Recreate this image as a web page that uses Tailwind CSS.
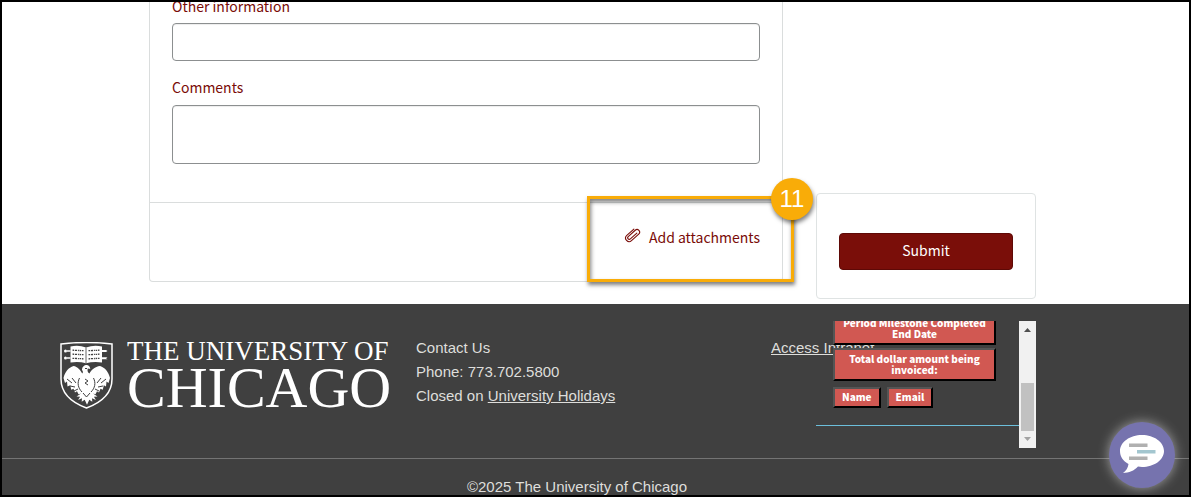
<!DOCTYPE html>
<html lang="en">
<head>
<meta charset="utf-8">
<meta name="viewport" content="width=device-width, initial-scale=1">
<title>Invoice request</title>
<script src="https://cdn.jsdelivr.net/npm/@tailwindcss/browser@4"></script>
</head>
<body class="bg-white">
<div class="relative flex min-h-screen flex-col overflow-hidden border-2 border-black font-['Noto_Sans_CJK_JP',sans-serif] text-sm text-[#7a0c08]">
  <main class="mx-auto flex w-full max-w-[893px] items-end gap-[33px] pr-[6px]">
    <form id="request" class="relative mb-[22px] flex-1 rounded-b border border-t-0 border-[#dadddd]">
      <div class="flex flex-col px-[22px] pb-[38px]">
        <label for="other" class="-mt-[6px] mb-[7px] leading-5">Other information</label>
        <input id="other" type="text" class="h-[38px] rounded border border-[#8c8f90] px-3 shadow-[inset_0_1px_1px_#00000013]">
        <label for="comments" class="mt-4 mb-2 leading-5">Comments</label>
        <textarea id="comments" class="block h-[59px] resize-none rounded border border-[#8c8f90] px-3 shadow-[inset_0_1px_1px_#00000013]"></textarea>
      </div>
      <div class="flex h-[79px] justify-end border-t border-[#dadddd] px-[22px] pt-[22px]">
        <button type="button" class="flex h-6 items-center gap-2">
          <svg class="-mt-1 h-4 w-[17px]" viewBox="0 0 17 16" fill="none" stroke="currentColor" stroke-width="1.1" stroke-linecap="round"><path transform="translate(8.500 8) rotate(-42)" d="M5-3.500H-4.500a3.500 3.500 0 0 0 0 7H5.200a2.600 2.600 0 0 0 0-5.200H-4.200a1.600 1.600 0 0 0 0 3.200H4.500"/></svg>
          Add attachments
        </button>
      </div>
      <div class="pointer-events-none absolute -right-[12px] -bottom-px h-[86px] w-[207px] border-[3px] border-[#f9ac08] shadow-[1px_3px_4px_#00000080,inset_1px_3px_4px_#00000080]"></div>
      <div class="absolute -right-[31px] bottom-[61px] flex size-[42px] items-center justify-center rounded-full bg-[#f9ac08] font-['Liberation_Sans',sans-serif] text-2xl text-white shadow-[1px_3px_4px_#00000080]">11</div>
    </form>
    <aside class="mb-[5px] w-[220px] rounded border border-[#dfe3e3] px-[22px] pt-[39px] pb-[28px]">
      <button type="submit" form="request" class="h-[37px] w-full rounded border border-[#5e0906] bg-[#7a0e09] pb-[3px] text-white">Submit</button>
    </aside>
  </main>
  <footer class="relative flex-1 bg-[#404040] font-['Liberation_Sans',sans-serif] text-[15px] text-[#dededb]">
    <div class="flex h-[154px] items-start pr-8 pl-[58px]">
      <a href="#" aria-label="The University of Chicago" class="mt-[38px] flex w-[356px] items-start gap-[14px] text-white">
        <svg class="h-[67px] w-[53px]" viewBox="0 0 53 67">
          <path d="M1 2q25.500-3 51 0v35c0 15-12 24-25.500 29C13 61 1 52 1 37z" fill="none" stroke="#fff" stroke-width="1.500"/>
          <g fill="#fff">
            <path d="M10.500 4.500q8-2 15.500 1 8-3 16-1v16q-8-1.500-16 .8-7.500-2.300-15.500-.8z"/>
            <circle cx="5.500" cy="9" r="1.500"/><circle cx="5.500" cy="16" r="1.500"/>
            <path d="M7 8.300h3.500v1.500H7zM7 15.300h3.500v1.500H7zM42 8h5.500l-1.500 1 1.500 1H42zM42 15.300h5.500l-1.500 1 1.500 1H42z"/>
            <path d="M22 28c0-3 2-5 5-5 2 .2 3 2 3.300 4l-2.500-.6c-.8 2 0 4 1.700 5.200C31 28 35 24.500 40 24c5 1.500 8.500 6 10 12l-1.500 5-2-1.500-.5 5-2.200-1.200-1 4.500-2.300-1-1.500 3.800-2-1.300-1.500 3-2.500-.8 4.500 3-3.600.2 2 3.200-3.900-1.600.3 3.400-3-2-2.300 5-2.300-5-3 2 .3-3.400-3.900 1.600 2-3.200-3.600-.2 4.500-3-2.500.8-1.500-3-2 1.300-1.500-3.800-2.300 1-1-4.500L7.500 44.500l-.5-5-2 1.500L3.500 36c1.500-6 5-10.500 10-12 4 .5 7 4 8.700 7.500 1-1 1-2-.2-3.500z"/>
          </g>
          <g stroke="#404040" fill="none">
            <path d="M26 5.500v15.500" stroke-width=".8"/>
            <path stroke-width="1.300" stroke-dasharray="1.500 .8 2.200 .9 1 .7" d="M12.500 8.200l11 .5M12.500 12.200l11 .5M12.500 16.300l11 .5M28.500 8.700l11-.5M28.500 12.700l11-.5M28.500 16.800l11-.5"/>
            <path stroke-width="1" d="M7 37l5 4M10 44l5 1M14 49l4-2M12 36l4 5M46 37l-5 4M43 44l-5 1M39 49l-4-2M41 36l-4 5M19.500 36c-2.500 5-1.500 10 2.500 14M33.500 36c2.500 5 1.500 10-2.500 14M23 51l3.500 4 3.500-4M25 26.500h2M25 37l3 2-3 2 3 2"/>
          </g>
        </svg>
        <span class="flex flex-col font-['Liberation_Serif',serif]"><span class="text-[27px] leading-[18px] whitespace-nowrap">THE UNIVERSITY OF</span><span class="text-[58px] leading-[56px]">CHICAGO</span></span>
      </a>
      <address class="mt-8 w-[355px] leading-6 not-italic">Contact Us<br>Phone: 773.702.5800<br>Closed on <a href="#" class="underline">University Holidays</a></address>
      <a href="#" class="mt-8 leading-6 underline">Access Intranet</a>
    </div>
    <p class="border-t border-[#747474] pt-5 pr-[37px] text-center leading-4">©2025 The University of Chicago</p>

    <!-- Field tags in a scrolling panel over the footer -->
    <div class="pointer-events-none absolute inset-x-0 top-[17px] mx-auto flex max-w-[893px] justify-end pr-[6px]">
      <div class="pointer-events-auto flex h-[127px] w-[220px] font-['Noto_Sans_CJK_JP',sans-serif] text-[10px] leading-[11px] font-black text-white">
        <div class="flex flex-1 flex-col justify-end overflow-hidden pb-[22px]">
          <div class="flex flex-col gap-[3px] pr-[23px] pl-[17px]">
            <button type="button" class="border-2 border-t-[#555] border-r-black border-b-black border-l-[#555] bg-[#d15852] pt-[3px] pb-1 whitespace-nowrap">Period Milestone Completed<br>End Date</button>
            <button type="button" class="border-2 border-t-[#555] border-r-black border-b-black border-l-[#555] bg-[#d15852] pt-[3px] pb-1 whitespace-nowrap">Total dollar amount being<br>invoiced:</button>
            <div class="mt-[3px] flex gap-[6px]">
              <button type="button" class="border-2 border-t-[#555] border-r-black border-b-black border-l-[#555] bg-[#d15852] px-[7px] pt-[2px] pb-1">Name</button>
              <button type="button" class="border-2 border-t-[#555] border-r-black border-b-black border-l-[#555] bg-[#d15852] px-[7px] pt-[2px] pb-1">Email</button>
            </div>
          </div>
          <div class="mt-[17px] border-t border-[#6cbfdb]"></div>
        </div>
        <div class="flex w-[17px] flex-col items-center justify-between bg-[#f1f1f1] py-[7px]">
          <svg class="h-1 w-[7px]" viewBox="0 0 7 4"><path d="M0 4 3.500 0 7 4z" fill="#505050"/></svg>
          <div class="mt-auto mb-[6px] h-12 w-[13px] bg-[#c1c1c1]"></div>
          <svg class="h-1 w-[7px]" viewBox="0 0 7 4"><path d="M0 0 3.500 4 7 0z" fill="#a3a3a3"/></svg>
        </div>
      </div>
    </div>
  </footer>
  <button type="button" aria-label="Open chat" class="absolute right-[14px] bottom-[7px] size-[66px] rounded-full bg-[#7673ae] shadow-[0_0_12px_#ffffff80]">
    <svg class="size-full" viewBox="0 0 66 66"><path d="M33 13c12 0 22 7 22 16S45 45 33 45q-2 0-4-.4C25 49 20 51 14 51c3-2 5-5 5.500-9C14 39 11 34.500 11 29c0-9 10-16 22-16z" fill="#fff"/><path d="M20 21.500h18.500v3.500H20zM20 34.500h18.500V38H20z" fill="#b0b0b0"/><path d="M28 28h18.500v3.500H28z" fill="#a3c6cf"/></svg>
  </button>
</div>
</body>
</html>
